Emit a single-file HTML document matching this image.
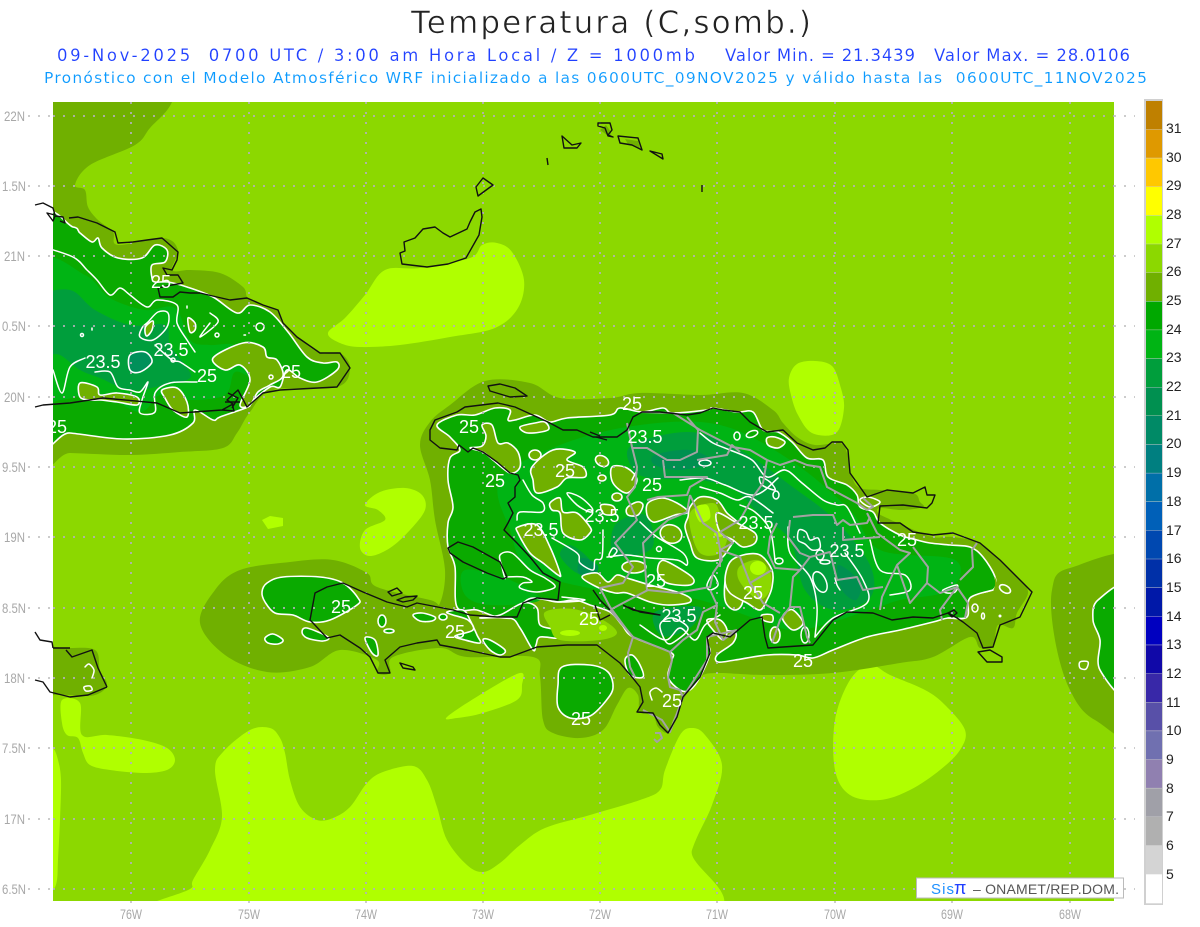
<!DOCTYPE html>
<html><head><meta charset="utf-8"><title>Temperatura</title>
<style>
html,body{margin:0;padding:0;background:#fff;width:1200px;height:927px;overflow:hidden}
svg{display:block;font-family:"Liberation Sans",sans-serif}
.o{fill:#70b000;stroke:#fff;stroke-width:1.6;stroke-linejoin:round}
.g{fill:#0aaa00;stroke:#fff;stroke-width:1.6;stroke-linejoin:round}
.w{fill:none;stroke:#fff;stroke-width:1.5;stroke-linejoin:round;stroke-linecap:round}
.c{fill:none;stroke:#111;stroke-width:1.4;stroke-linejoin:round}
.b{fill:none;stroke:#a3a3a3;stroke-width:2;stroke-linejoin:round}
.l{fill:#fff;font-size:18px;text-anchor:middle}
.ax{fill:#a8a8a8;font-size:14px}
.cb{fill:#222;font-size:14px}
.h{font-family:"DejaVu Sans","Liberation Sans",sans-serif}
</style></head><body>
<svg width="1200" height="927" viewBox="0 0 1200 927" xmlns="http://www.w3.org/2000/svg">
<defs><clipPath id="p"><rect x="53" y="102" width="1061" height="799"/></clipPath></defs>
<text class="h" x="411" y="33" font-size="31" textLength="400" lengthAdjust="spacing" fill="#222" stroke="#fff" stroke-width=".6">Temperatura (C,somb.)</text>
<g class="h" fill="#2040ff" font-size="16.500" stroke="#fff" stroke-width=".12">
<text x="57" y="61" textLength="638" lengthAdjust="spacing" xml:space="preserve">09-Nov-2025  0700 UTC / 3:00 am Hora Local / Z = 1000mb</text>
<text x="725" y="61" textLength="190" lengthAdjust="spacing">Valor Min. = 21.3439</text>
<text x="934" y="61" textLength="196" lengthAdjust="spacing">Valor Max. = 28.0106</text>
</g>
<text class="h" x="44" y="83" font-size="15.500" fill="#0a9aff" stroke="#fff" stroke-width=".12" textLength="1103" lengthAdjust="spacing" xml:space="preserve">Pronóstico con el Modelo Atmosférico WRF inicializado a las 0600UTC_09NOV2025 y válido hasta las  0600UTC_11NOV2025</text>

<g clip-path="url(#p)">
<rect x="53" y="102" width="1061" height="799" fill="#8cd800"/>
<!-- light areas -->
<g fill="#b0ff00">
<path class="s" d="M328,333L345,318L365,295L385,270L420,268L470,258L482,245L497,243L512,252L524,280L518,308L495,328L450,337L400,345L360,347L340,343Z"/>
<path class="s" d="M789,378L797,364L815,361L832,366L840,385L844,408L836,433L812,433L798,415L791,395Z"/>
<path class="s" d="M365,505L380,492L405,488L422,495L425,510L410,530L390,548L370,556L360,548L365,530L385,520L378,510Z"/>
<path d="M262,520L270,516L283,518L283,526L268,529Z"/>
<path class="s" d="M20,925L100,925L130,910L160,900L190,889L193,880L210,850L222,817L215,770L223,752L250,730L270,728L280,738L285,753L290,780L300,807L317,820L333,818L350,807L367,783L383,772L413,766L427,780L437,807L447,840L467,865L483,872L500,863L520,845L545,828L590,815L640,800L660,790L665,770L680,735L692,728L705,735L722,765L712,805L692,850L670,925Z"/>
<path class="s" d="M45,748L53,748L58,760L61,780L60,820L58,860L57,880L53,890L45,890Z"/>
<path class="s" d="M62,700L80,703L82,735L107,735L143,740L167,748L175,760L167,770L143,773L110,770L90,765L83,753L78,738L67,735L62,723Z"/>
<path class="s" d="M447,717L483,693L520,673L522,685L517,700L483,713L457,718Z"/>
<path class="s" d="M835,720L850,680L870,665L890,675L925,690L945,705L965,730L960,750L940,770L910,790L880,800L850,795L835,770Z"/>
</g>
<!-- olive -->
<g fill="#70b000">
<path class="s" d="M20,60L180,60L172,102L150,128L135,145L90,165L75,185L85,190L88,207L98,220L113,232L118,245L163,238L178,250L172,270L190,270L220,273L243,287L248,298L263,305L278,310L283,323L297,337L320,353L340,353L350,368L337,387L273,390L250,412L237,433L223,448L180,452L130,455L70,453L20,452Z"/>
<path class="s" d="M420,445L430,422L450,405L485,381L530,383L560,398L610,398L640,393L700,395L743,393L773,410L783,423L797,437L815,445L840,443L847,453L852,477L860,488L880,490L913,493L920,502L923,507L903,510L880,508L878,513L887,518L907,527L933,537L953,537L980,543L1000,560L1020,580L1028,593L1017,613L1013,628L998,625L993,645L980,648L970,637L933,657L900,663L833,673L767,675L717,673L700,677L687,693L673,720L668,733L658,727L653,715L640,712L638,695L628,688L617,705L603,730L580,738L553,733L543,720L540,677L533,657L467,657L440,648L393,657L390,673L377,673L377,660L340,650L310,667L267,672L225,655L200,623L215,590L240,570L290,562L333,560L367,573L377,587L430,600L440,603L445,570L435,520L430,480Z"/>
<path class="s" d="M1150,565L1070,568L1052,590L1055,640L1070,690L1095,720L1150,735Z"/>
<path class="s" d="M20,648L66,648L95,650L100,670L107,685L95,695L70,695L20,690Z"/>
<path d="M606,125L611,132L610,137L600,130ZM625,139L638,141L640,148L628,144Z"/>
</g>
<!-- Cuba green -->
<path class="g" d="M40,226L73,227L80,233L92,242L98,238L102,248L118,258L142,258L155,245L167,250L165,262L152,265L152,278L155,282L168,282L187,287L213,297L237,313L250,305L270,312L288,332L307,357L323,363L337,362L337,370L317,382L300,378L287,370L280,387L270,387L250,403L248,407L220,417L213,420L195,410L193,423L170,435L123,439L70,433L40,432Z"/>
<path class="s" fill="#00b414" d="M40,265L85,275L110,298L145,310L175,308L190,340L210,345L235,345L262,362L255,378L235,372L225,395L190,400L160,395L140,412L100,395L60,400L40,398Z"/>
<path class="s" fill="#009e3c" d="M40,300L70,290L95,310L130,325L165,325L170,345L185,365L190,378L165,385L130,390L100,378L80,370L60,355L40,350Z"/>
<path class="g" style="fill:#00905a" d="M130,355L145,352L152,362L140,372L130,370Z"/>
<path class="o" d="M80,383L97,387L100,395L117,393L137,397L137,405L117,402L100,400L90,400L80,397Z"/>
<path class="o" d="M162,390L177,388L187,402L187,417L173,410L165,398Z"/>
<path class="o" d="M213,358L243,343L263,347L267,357L277,360L283,376L270,385L258,392L250,405L240,405L250,380L240,365L225,370Z"/>
<path class="w" d="M148,322L158,312L168,313L167,327L153,340L140,337L142,328Z"/>
<path class="o" d="M146,326L153,321L152,330L147,336L145,332Z"/>
<path class="o" d="M188,318L195,323L195,330L190,332Z"/>
<path class="w" d="M40,246L73,257L87,270L97,280L110,295L120,288L130,295L147,307L157,300L177,305L177,323L187,340L195,352"/>
<path class="w" d="M53,370L62,393L70,367L85,358"/>
<path class="w" d="M95,372L110,372L118,387L130,390L140,392L148,382L142,400L140,413L155,412L155,393L170,383L197,382"/>
<path class="w" d="M155,345L172,360L180,362L195,372"/>
<path class="w" d="M210,313L218,322L200,337L210,323"/>
<circle class="w" cx="260" cy="327" r="4"/><circle class="w" cx="82" cy="335" r="1.500"/><circle class="w" cx="271" cy="377" r="2"/><circle class="w" cx="217" cy="335" r="2"/><circle class="w" cx="173" cy="360" r="2"/>
<path class="w" d="M92,328V330M130,321V324M187,306V308M244,335H245.500"/>
<!-- Hispaniola green -->
<path class="g" d="M437,425L457,415L475,415L495,408L510,410L508,420L515,420L535,415L550,422L567,418L610,415L620,408L642,412L663,408L673,413L707,410L713,408L737,412L753,412L763,430L778,432L792,442L807,458L823,460L828,477L847,485L857,495L860,507L873,512L880,523L900,535L917,540L930,543L950,545L970,547L983,557L995,577L993,590L970,598L967,617L948,618L933,622L900,630L867,637L833,650L813,658L797,655L767,655L735,660L718,662L717,655L733,643L735,632L718,632L707,640L710,653L700,677L690,690L680,690L668,677L672,660L670,652L633,637L622,625L610,612L590,605L575,600L557,602L537,598L523,603L517,617L497,617L477,610L457,607L455,567L448,547L448,523L453,507L448,480L450,458L460,450L450,437Z"/>
<path class="s" fill="#00b414" d="M500,480L560,445L640,425L720,425L790,460L850,510L880,550L955,560L950,590L900,600L870,610L800,630L760,620L700,600L640,590L600,590L530,570L510,530Z"/>
<path class="s" fill="#00b414" d="M465,570L510,580L540,600L490,605L465,595Z"/>
<path class="s" fill="#009e3c" d="M632,445L690,432L740,450L790,485L835,520L870,565L870,598L835,610L805,590L790,540L760,515L735,490L700,480L650,478L632,468Z"/>
<path class="s" fill="#009e3c" d="M615,525L645,515L652,548L615,556Z"/>
<path class="s" fill="#009e3c" d="M570,545L590,560L595,578L575,572L560,555Z"/>
<path class="s" fill="#009e3c" d="M655,612L700,607L690,628L662,636Z"/>
<path class="s" fill="#009050" d="M655,455L690,450L712,462L680,470L655,465Z"/>
<path class="s" fill="#009050" d="M838,565L860,582L856,600L842,590Z"/>
<path class="s" fill="#009050" d="M582,558L598,566L592,578L578,572Z"/>
<!-- holes -->
<path class="o" d="M482,425L492,425L498,443L508,443L518,452L520,467L510,473L493,460L483,452L470,448L482,446L486,436Z"/>
<path class="o" d="M520,427L535,423L545,422L548,430L528,433Z"/>
<ellipse class="o" cx="535" cy="455" rx="6" ry="5"/>
<path class="o" d="M532,467L553,450L575,452L567,460L583,467L585,477L567,478L557,487L537,493L533,480Z"/>
<ellipse class="o" cx="602" cy="461" rx="7" ry="5" transform="rotate(30 602 461)"/>
<ellipse class="o" cx="602" cy="478" rx="4" ry="3"/>
<path class="o" d="M612,467L627,468L637,480L627,493L613,483Z"/>
<ellipse class="o" cx="617" cy="497" rx="5" ry="4"/>
<path class="w" d="M567,493L580,497L592,508L590,512L577,505Z"/>
<path class="o" d="M550,503L560,498L563,512L577,513L590,527L590,533L580,540L563,533L560,513L552,510Z"/>
<path class="o" d="M627,508L637,502L643,505L638,515L628,515Z"/>
<path class="o" d="M601,505L613,506L615,514L604,514Z"/>
<path class="o" d="M518,527L537,525L550,547L560,573L558,575L543,563L530,553L518,533Z"/>
<path class="o" d="M648,503L662,498L677,503L688,512L675,515L662,520L653,522L647,515Z"/>
<path class="o" d="M688,517L690,507L700,497L717,500L727,513L738,523L737,533L730,547L718,560L697,558L690,543L685,527Z"/>
<path class="s" fill="#8cd800" d="M692,510L713,503L720,513L728,533L720,553L700,553L690,527Z"/>
<path class="s" fill="#b0ff00" d="M695,508L707,505L710,518L700,522Z"/>
<ellipse cx="719" cy="534" rx="5" ry="3" fill="#b0ff00"/>
<ellipse class="o" cx="671" cy="534" rx="11" ry="9" transform="rotate(20 671 534)"/>
<ellipse class="o" cx="634" cy="567" rx="12" ry="6"/>
<path class="o" d="M660,562L668,562L692,577L690,585L667,583L658,573Z"/>
<path class="o" d="M582,577L597,573L608,582L617,575L627,578L650,585L677,592L690,598L688,603L667,605L650,602L627,593L615,593L597,587Z"/>
<path class="w" d="M713,575L718,585L710,590L707,585Z"/>
<path class="o" d="M727,573L740,567L743,600L735,610L725,600Z"/>
<!-- Haiti south -->
<path class="g" d="M262,592L267,583L283,577L320,577L343,583L358,598L357,605L330,620L310,622L293,615L275,613L265,602Z"/>
<path class="g" d="M265,638L273,634L283,640L278,644L268,643Z"/>
<path class="g" d="M302,632L307,628L328,637L323,641L307,638Z"/>
<ellipse class="g" cx="382" cy="621" rx="4" ry="6"/>
<ellipse class="g" cx="389" cy="631" rx="5" ry="2"/>
<path class="g" d="M365,638L375,640L378,655L372,653Z"/>
<path class="g" d="M413,615L422,613L435,617L432,621L420,621Z"/>
<ellipse class="g" cx="443" cy="617" rx="4" ry="3"/>
<path class="g" d="M447,612L463,610L470,620L477,635L480,643L465,640L455,636L473,630L468,620L453,615Z"/>
<path class="g" d="M480,618L510,618L520,628L533,650L536,645L540,637L558,638L556,630L540,625L537,608L523,603L500,615Z"/>
<path class="g" d="M483,640L490,640L505,650L500,655L490,650Z"/>
<path class="g" d="M562,667L590,665L608,672L613,688L605,702L590,716L570,718L558,707L558,685Z"/>
<path class="s" fill="#8cd800" d="M545,612L573,609L603,620L617,633L600,640L560,640L550,627Z"/>
<ellipse cx="570" cy="633" rx="10" ry="3" fill="#b0ff00"/><ellipse cx="603" cy="628" rx="4" ry="3" fill="#b0ff00"/>
<path class="g" d="M625,660L632,655L640,665L643,677L630,675Z"/>
<path class="w" d="M652,700L650,692L656,688L662,692"/>
<path class="g" d="M1130,590L1098,600L1093,620L1100,640L1100,670L1130,695Z"/>
<!-- DR holes -->
<ellipse class="w" cx="737" cy="436" rx="3" ry="4"/>
<ellipse class="w" cx="752" cy="434" rx="6" ry="3" transform="rotate(-20 752 434)"/>
<path class="o" d="M767,438L775,437L785,442L778,448L768,445Z"/>
<ellipse class="w" cx="705" cy="463" rx="6" ry="3"/>
<ellipse class="w" cx="776" cy="495" rx="3" ry="4"/>
<path class="w" d="M760,477L770,482L775,490L762,485Z"/>
<path class="o" d="M717,513L737,523L755,533L755,543L743,547L733,540L720,532Z"/>
<path class="o" d="M730,562L743,555L760,555L772,570L772,587L767,600L760,610L747,603L730,593L725,580Z"/>
<path class="s" fill="#8cd800" d="M740,566L758,560L770,572L770,590L760,600L748,592L738,578Z"/>
<ellipse cx="758" cy="568" rx="8" ry="7" fill="#b0ff00"/>
<path class="o" d="M785,613L793,610L803,623L793,630L783,620Z"/>
<ellipse class="o" cx="775" cy="635" rx="5" ry="8"/>
<ellipse class="w" cx="805" cy="635" rx="4" ry="8"/>
<path class="o" d="M707,620L720,620L727,630L723,640L713,630Z"/>
<path class="o" d="M762,615L772,615L772,622L763,620Z"/>
<path class="o" d="M860,500L868,497L880,502L870,507Z"/>
<path class="w" d="M799,530L806,532L810,540L818,538L820,548L812,550L805,544L798,540Z"/>
<ellipse class="w" cx="820" cy="555" rx="4" ry="5"/>
<ellipse class="w" cx="825" cy="562" rx="5" ry="2"/>
<ellipse class="w" cx="820" cy="582" rx="6" ry="11" transform="rotate(-25 820 582)"/>
<ellipse class="w" cx="779" cy="561" rx="4" ry="3"/>
<path class="w" d="M835,578L837,585L840,590"/>
<path class="s" fill="#70b000" d="M970,598L993,590L995,577L1002,610L985,625L967,617Z"/>
<path class="w" d="M993,590L970,598L967,617L948,618"/>
<ellipse class="o" cx="1005" cy="589" rx="6" ry="3.500" transform="rotate(30 1005 589)"/>
<ellipse class="w" cx="975" cy="608" rx="3" ry="4"/>
<ellipse class="w" cx="983" cy="616" rx="1.500" ry="3"/>
<circle cx="1000" cy="616" r="1.500" fill="#fff"/>
<path class="w" d="M943,590L957,585L955,592L947,593Z"/>
<!-- inner white contours -->
<path class="w" d="M700,433L713,443L730,450L752,460L767,477L785,470L802,483L823,500L837,505L847,507L860,533"/>
<path class="w" d="M700,487L720,493L737,500L750,497L773,513"/>
<path class="w" d="M788,527L790,553L810,577L817,607L815,637"/>
<path class="w" d="M845,553L863,580L867,603L833,618L815,637"/>
<path class="w" d="M523,480L532,495L543,503L542,512L520,512L517,520"/>
<path class="w" d="M552,538L577,553L580,563L593,570L595,560L602,557L603,530"/>
<path class="w" d="M607,557L627,555L650,558L677,560L687,565L683,553L657,537L640,522"/>
<path class="w" d="M500,555L512,553L530,570L545,578L555,587L537,592L520,588L523,583L532,582L523,577L507,577L505,578L502,567Z"/>
<path class="w" d="M523,603L533,598L560,602L585,600L562,597"/>
<path class="w" d="M613,548L609,555L612,557L617,551Z"/>
<path class="w" d="M637,470L632,480"/>
<path class="w" d="M680,480L705,478L725,485L755,495L778,478"/>
<path class="w" d="M870,540L880,570L905,575L910,590L890,595"/>
<path class="w" d="M740,505L755,512L770,530L775,560"/>
<path class="w" d="M640,625L665,640L680,628L695,640L705,625L720,615"/>
<path class="w" d="M667,643L660,625L672,618L688,628L677,640Z"/>
<circle class="w" cx="659" cy="549" r="2.500"/>
<path class="w" d="M85,667L89,664L94,670L92,678"/>
<path class="w" d="M84,687L90,686L92,690L86,691Z"/>
<path class="w" d="M1080,662L1088,662L1086,669L1080,668Z"/>
<!-- grid -->
<g stroke="#b4b0bc" stroke-width="2" stroke-dasharray="2 8" fill="none" opacity=".85">
<path d="M53,116H1135M53,186H1135M53,256H1135M53,326H1135M53,397H1135M53,467H1135M53,537H1135M53,608H1135M53,678H1135M53,748H1135M53,819H1135M53,889H1135"/>
<path d="M131,102V905M249,102V905M366,102V905M483,102V905M600,102V905M717,102V905M835,102V905M952,102V905M1070,102V905"/>
</g>
</g>
<!-- grid outside -->
<g stroke="#bbb" stroke-width="1.500" stroke-dasharray="2 8" fill="none">
<path d="M28,116H53M28,186H53M28,256H53M28,326H53M28,397H53M28,467H53M28,537H53M28,608H53M28,678H53M28,748H53M28,819H53M28,889H53"/>
<path d="M1114,116H1135M1114,186H1135M1114,256H1135M1114,326H1135M1114,397H1135M1114,467H1135M1114,537H1135M1114,608H1135M1114,678H1135M1114,748H1135M1114,819H1135M1114,889H1135"/>
<path d="M131,901V907M249,901V907M366,901V907M483,901V907M600,901V907M717,901V907M835,901V907M952,901V907M1070,901V907"/>
</g>
<!-- borders -->
<g>
<path class="b" d="M627,423L632,447L637,467L635,487L627,497L637,520L615,543L633,567L623,583L600,588L610,607L627,630L633,637L628,653L630,667L635,677"/>
<path class="b" d="M633,448L647,448L667,460L680,460L697,452L698,430L687,417M697,460L727,455L732,445L740,452M663,460L665,477L707,477L690,487L687,495L658,497L647,500M690,495L703,523L717,533L722,560L713,573L710,587L677,593L647,590L643,543L653,533L668,520L687,512L690,495"/>
<path class="b" d="M642,412L673,413L700,430L733,447L750,450L767,460L763,483L753,497L740,520L720,532L733,543L720,550L720,567M767,460L780,465L795,460L807,465L820,467L827,487L857,503L867,510L873,507L863,498M867,513L877,533L900,550L910,553L897,565L882,597L880,610M897,565L910,603L927,583L928,567L913,547M927,583L940,593L957,587L940,610L942,620M957,587L968,603L965,618M960,580L973,567L972,550L977,543"/>
<path class="b" d="M793,517L813,515L833,515L837,525L843,520L850,525L867,523L870,517M843,527L843,540L880,537M790,520L788,537L800,553L810,557L800,570L775,568L768,553L770,537L777,523M810,557L830,552L837,580L857,577L863,590L883,587M800,570L793,577L790,607L780,620L772,643M790,607L800,607L807,637L810,643M720,550L740,557L750,583L772,570M750,583L757,593L763,603L780,613"/>
<path class="b" d="M717,605L703,612L697,630L683,640L670,652L672,660L668,677L670,687L680,690L683,697M670,652L633,637M633,637L610,610L623,603L648,590M717,605L715,622L723,640L737,630M707,637L737,630M643,710L662,720L670,732L683,697L707,660L707,637M655,733L660,733L662,738L657,742L654,739M710,590L717,605"/>
</g>
<!-- coasts -->
<g>
<path class="c" d="M402,264L400,253L405,251L404,242L415,238L423,229L435,227L443,233L450,237L467,229L470,222L475,212L481,209L482,217L479,235L466,258L448,264L427,267Z"/>
<path class="c" d="M476,187L483,178L493,185L478,196Z"/>
<path class="c" d="M562,136L564,148L577,148L581,143L572,145Z"/>
<path class="c" d="M547,158L548,165M702,185L702,192"/>
<path class="c" d="M598,123L610,123L612,130L608,135L613,137L608,136L605,128L598,126Z"/>
<path class="c" d="M618,136L638,138L642,150L632,145L620,143Z"/>
<path class="c" d="M650,151L662,154L663,159Z"/>
<path class="c" d="M35,205L43,203L53,208L55,215L47,213L53,221L55,216L63,217L65,223L60,221M69,218L78,217L97,223L115,232L118,243L133,242L147,240L162,238L178,252L177,260L172,270L163,268L167,275L178,275L183,283L172,285L158,288L160,297L173,297L180,292L190,293L200,293L217,297L230,300L247,298L263,305L278,310L283,323L297,337L320,353L340,353L350,368L337,387L280,390L263,393L247,407L238,390L227,400L233,404L222,410L180,413L157,403L103,398L70,403L43,405L35,407"/>
<path class="c" d="M222,410L234,411L232,403"/>
<path class="c" d="M35,632L40,640L52,642L53,648M35,680L43,682L50,692L70,697L88,695L107,687"/>
<path class="c" d="M53,648L70,648M66,650L72,657L92,650L98,668L107,687"/>
<path class="c" d="M435,420L430,430L430,440L440,448L457,450L459,445L468,452L473,448L483,452L497,462L510,473L518,475L520,480L515,487L515,497L508,503L513,513L508,523L504,530L517,543L530,557L543,573L560,582L558,600L537,598L523,603L517,617L497,617L470,615L453,610L417,603L407,607L387,602L363,592L343,583L327,587L315,593L310,620L313,623L327,638L340,635L360,648L370,657L378,673L390,673L385,660L400,647L417,643L437,640L440,645L467,650L500,657L510,657L537,647L567,645L597,645L620,663L632,677L640,687L643,702L637,712L653,713L660,725L668,733L677,717L683,697L700,677L710,653L707,637L713,633L730,637L750,620L762,617L765,637L768,648L813,645L833,620L847,612L873,613L892,620L913,617L933,618L948,613L957,618L963,622L977,633L983,648L993,647L1000,625L1020,617L1032,592L1000,560L980,543L953,533L933,535L913,532L900,523L878,523L880,506L903,505L927,508L932,503L935,495L927,495L925,487L913,493L887,490L867,497L860,487L850,473L848,450L842,442L832,442L825,448L813,450L797,443L783,430L767,432L750,422L740,412L723,410L713,408L700,413L687,415L660,412L642,412L633,417L627,430L617,437L593,437L577,430L563,430L548,422L515,407L498,403L465,407L457,412Z"/>
<path class="c" d="M448,548L458,542L473,547L500,562L507,577L503,579L487,573L463,562L450,553Z"/>
<path class="c" d="M488,386L500,384L515,388L527,396L510,397L490,391Z"/>
<path class="c" d="M388,592L397,588L402,593L392,596ZM397,600L405,597L417,596L413,600L403,602ZM400,663L413,667L415,670L403,668Z"/>
<path class="c" d="M978,652L990,650L1002,657L1002,662L987,662Z"/>
<path class="c" d="M593,590L600,600L610,610M623,605L633,610L660,615L640,612L628,607M595,605L600,620L610,615"/>
<path class="c" d="M948,613L952,617L957,613L954,610Z" stroke="#0a6000"/>
<path class="c" d="M596,437L607,440M590,432L600,436" stroke-width="2"/>
<path class="c" d="M228,393L238,398L232,408M225,402L240,402"/>
</g>
<!-- labels -->
<g>
<text class="l" x="57" y="433">25</text><text class="l" x="161" y="288">25</text><text class="l" x="207" y="382">25</text><text class="l" x="291" y="378">25</text>
<text class="l" x="632" y="410">25</text><text class="l" x="469" y="433">25</text><text class="l" x="565" y="477">25</text><text class="l" x="495" y="487">25</text><text class="l" x="652" y="491">25</text><text class="l" x="907" y="546">25</text><text class="l" x="341" y="613">25</text><text class="l" x="656" y="587">25</text><text class="l" x="753" y="599">25</text><text class="l" x="455" y="638">25</text><text class="l" x="589" y="625">25</text><text class="l" x="803" y="667">25</text><text class="l" x="581" y="725">25</text><text class="l" x="672" y="707">25</text>
<text class="l" x="103" y="368">23.5</text><text class="l" x="171" y="356">23.5</text><text class="l" x="645" y="443">23.5</text><text class="l" x="541" y="536">23.5</text><text class="l" x="602" y="522">23.5</text><text class="l" x="756" y="529">23.5</text><text class="l" x="847" y="557">23.5</text><text class="l" x="679" y="622">23.5</text>
</g>
<!-- axis labels -->
<g class="ax">
<text x="4" y="121" textLength="21" lengthAdjust="spacingAndGlyphs">22N</text><text x="2" y="191" textLength="24" lengthAdjust="spacingAndGlyphs">1.5N</text><text x="4" y="261" textLength="21" lengthAdjust="spacingAndGlyphs">21N</text><text x="2" y="331" textLength="24" lengthAdjust="spacingAndGlyphs">0.5N</text><text x="4" y="402" textLength="21" lengthAdjust="spacingAndGlyphs">20N</text><text x="2" y="472" textLength="24" lengthAdjust="spacingAndGlyphs">9.5N</text><text x="4" y="542" textLength="21" lengthAdjust="spacingAndGlyphs">19N</text><text x="2" y="613" textLength="24" lengthAdjust="spacingAndGlyphs">8.5N</text><text x="4" y="683" textLength="21" lengthAdjust="spacingAndGlyphs">18N</text><text x="2" y="753" textLength="24" lengthAdjust="spacingAndGlyphs">7.5N</text><text x="4" y="824" textLength="21" lengthAdjust="spacingAndGlyphs">17N</text><text x="2" y="894" textLength="24" lengthAdjust="spacingAndGlyphs">6.5N</text>
<text x="120" y="919" textLength="22" lengthAdjust="spacingAndGlyphs">76W</text><text x="238" y="919" textLength="22" lengthAdjust="spacingAndGlyphs">75W</text><text x="355" y="919" textLength="22" lengthAdjust="spacingAndGlyphs">74W</text><text x="472" y="919" textLength="22" lengthAdjust="spacingAndGlyphs">73W</text><text x="589" y="919" textLength="22" lengthAdjust="spacingAndGlyphs">72W</text><text x="706" y="919" textLength="22" lengthAdjust="spacingAndGlyphs">71W</text><text x="824" y="919" textLength="22" lengthAdjust="spacingAndGlyphs">70W</text><text x="941" y="919" textLength="22" lengthAdjust="spacingAndGlyphs">69W</text><text x="1059" y="919" textLength="22" lengthAdjust="spacingAndGlyphs">68W</text>
</g>
<!-- color bar -->
<rect x="1144" y="99" width="19" height="806" fill="#d0d0d0"/>
<g>
<rect x="1146" y="101" width="16" height="28.200" fill="#bf8000"/><rect x="1146" y="129.600" width="16" height="28.200" fill="#df9900"/><rect x="1146" y="158.300" width="16" height="28.200" fill="#ffc800"/><rect x="1146" y="186.900" width="16" height="28.200" fill="#ffff00"/><rect x="1146" y="215.600" width="16" height="28.200" fill="#b0ff00"/><rect x="1146" y="244.200" width="16" height="28.200" fill="#8cd800"/><rect x="1146" y="272.800" width="16" height="28.200" fill="#70b000"/><rect x="1146" y="301.500" width="16" height="28.200" fill="#00a800"/><rect x="1146" y="330.100" width="16" height="28.200" fill="#00b414"/><rect x="1146" y="358.800" width="16" height="28.200" fill="#009e3c"/><rect x="1146" y="387.400" width="16" height="28.200" fill="#009050"/><rect x="1146" y="416" width="16" height="28.200" fill="#008a66"/><rect x="1146" y="444.700" width="16" height="28.200" fill="#007f80"/><rect x="1146" y="473.300" width="16" height="28.200" fill="#006fa8"/><rect x="1146" y="502" width="16" height="28.200" fill="#0060b8"/><rect x="1146" y="530.600" width="16" height="28.200" fill="#0048b0"/><rect x="1146" y="559.200" width="16" height="28.200" fill="#0030a8"/><rect x="1146" y="587.900" width="16" height="28.200" fill="#0018a8"/><rect x="1146" y="616.500" width="16" height="28.200" fill="#0000c0"/><rect x="1146" y="645.200" width="16" height="28.200" fill="#1008a8"/><rect x="1146" y="673.800" width="16" height="28.200" fill="#3828a8"/><rect x="1146" y="702.400" width="16" height="28.200" fill="#5850a8"/><rect x="1146" y="731.100" width="16" height="28.200" fill="#7070b0"/><rect x="1146" y="759.700" width="16" height="28.200" fill="#9080b0"/><rect x="1146" y="788.400" width="16" height="28.200" fill="#a0a0a8"/><rect x="1146" y="817" width="16" height="28.200" fill="#b0b0b0"/><rect x="1146" y="845.600" width="16" height="28.600" fill="#d4d4d4"/><rect x="1146" y="874.300" width="16" height="29" fill="#fff"/>
</g>
<g class="cb">
<text x="1166" y="133">31</text><text x="1166" y="162">30</text><text x="1166" y="190">29</text><text x="1166" y="219">28</text><text x="1166" y="248">27</text><text x="1166" y="276">26</text><text x="1166" y="305">25</text><text x="1166" y="334">24</text><text x="1166" y="362">23</text><text x="1166" y="391">22</text><text x="1166" y="420">21</text><text x="1166" y="448">20</text><text x="1166" y="477">19</text><text x="1166" y="506">18</text><text x="1166" y="535">17</text><text x="1166" y="563">16</text><text x="1166" y="592">15</text><text x="1166" y="621">14</text><text x="1166" y="649">13</text><text x="1166" y="678">12</text><text x="1166" y="707">11</text><text x="1166" y="735">10</text><text x="1166" y="764">9</text><text x="1166" y="793">8</text><text x="1166" y="821">7</text><text x="1166" y="850">6</text><text x="1166" y="879">5</text>
</g>
<!-- logo box -->
<rect x="916.500" y="878" width="207" height="20" fill="#fff" stroke="#bbb" stroke-width="1"/>
<text x="931" y="894" font-size="15" fill="#1e90ff" textLength="23" lengthAdjust="spacing">Sis</text>
<text x="954" y="894" font-size="18" fill="#2040ff">π</text>
<text x="973" y="894" font-size="14" fill="#555" textLength="146" lengthAdjust="spacing" xml:space="preserve">– ONAMET/REP.DOM.</text>
</svg>
<script>
document.querySelectorAll('path.s,path.o,path.g,path.w').forEach(function(e){
var d=e.getAttribute('d');if(/[CVHQ]/.test(d))return;var out='';
d.split('M').forEach(function(s){if(!s)return;var z=/Z/.test(s),n=s.match(/-?[\d.]+/g).map(Number),p=[];
for(var i=0;i<n.length;i+=2)p.push([n[i],n[i+1]]);var m=p.length;if(m<3){out+='M'+s;return;}
out+='M'+p[0].join(',');var k=z?m:m-1;
for(var i=0;i<k;i++){var a=z?p[(i-1+m)%m]:p[Math.max(i-1,0)],b=p[i],c=p[(i+1)%m],f=z?p[(i+2)%m]:p[Math.min(i+2,m-1)];
out+='C'+(b[0]+(c[0]-a[0])/6).toFixed(1)+','+(b[1]+(c[1]-a[1])/6).toFixed(1)+' '+(c[0]-(f[0]-b[0])/6).toFixed(1)+','+(c[1]-(f[1]-b[1])/6).toFixed(1)+' '+c[0]+','+c[1];}
if(z)out+='Z';});
e.setAttribute('d',out);});
</script>
</body></html>
